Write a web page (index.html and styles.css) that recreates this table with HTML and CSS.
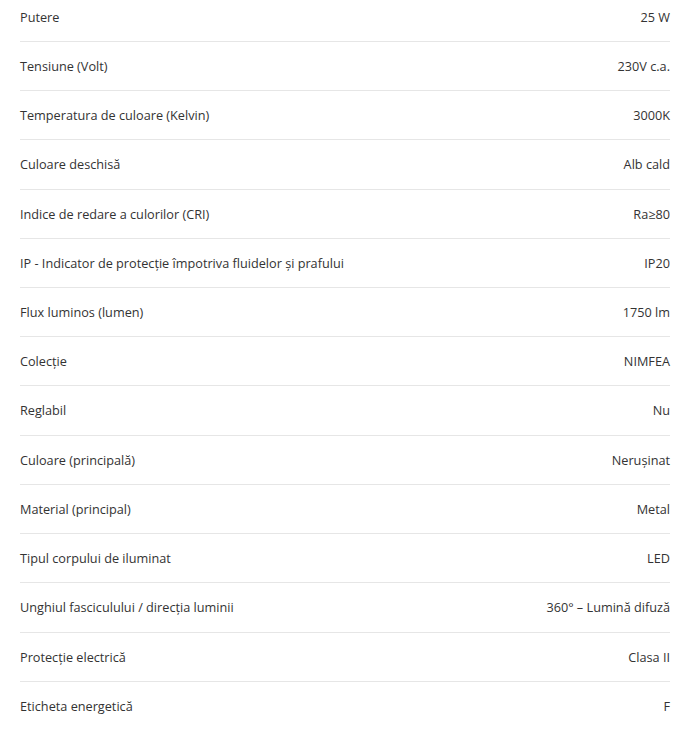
FILE: index.html
```html
<!DOCTYPE html>
<html lang="ro">
<head>
<meta charset="utf-8">
<link rel="stylesheet" href="styles.css">
</head>
<body>
<div class="specs">
  <div class="row"><span class="label">Putere</span><span class="value">25 W</span></div>
  <div class="row"><span class="label">Tensiune (Volt)</span><span class="value">230V c.a.</span></div>
  <div class="row"><span class="label">Temperatura de culoare (Kelvin)</span><span class="value">3000K</span></div>
  <div class="row"><span class="label">Culoare deschisă</span><span class="value">Alb cald</span></div>
  <div class="row"><span class="label">Indice de redare a culorilor (CRI)</span><span class="value">Ra≥80</span></div>
  <div class="row"><span class="label">IP - Indicator de protecție împotriva fluidelor și prafului</span><span class="value">IP20</span></div>
  <div class="row"><span class="label">Flux luminos (lumen)</span><span class="value">1750 lm</span></div>
  <div class="row"><span class="label">Colecție</span><span class="value">NIMFEA</span></div>
  <div class="row"><span class="label">Reglabil</span><span class="value">Nu</span></div>
  <div class="row"><span class="label">Culoare (principală)</span><span class="value">Nerușinat</span></div>
  <div class="row"><span class="label">Material (principal)</span><span class="value">Metal</span></div>
  <div class="row"><span class="label">Tipul corpului de iluminat</span><span class="value">LED</span></div>
  <div class="row"><span class="label">Unghiul fasciculului / direcția luminii</span><span class="value">360° – Lumină difuză</span></div>
  <div class="row"><span class="label">Protecție electrică</span><span class="value">Clasa II</span></div>
  <div class="row"><span class="label">Eticheta energetică</span><span class="value">F</span></div>
</div>
</body>
</html>
```
FILE: styles.css
```css
html, body {
  margin: 0;
  padding: 0;
  background: #ffffff;
}
body {
  font-family: "Open Sans", "Noto Sans", sans-serif;
  font-size: 12.7px;
  color: #333333;
}
.specs {
  margin-top: -7.4px;
  padding: 0 15px 0 20px;
}
.row {
  display: flex;
  justify-content: space-between;
  align-items: center;
  padding: 14px 0;
  line-height: 20.23px;
  border-bottom: 1px solid #e6e6e6;
}
.row:last-child {
  border-bottom: none;
}
.value {
  text-align: right;
}
```
